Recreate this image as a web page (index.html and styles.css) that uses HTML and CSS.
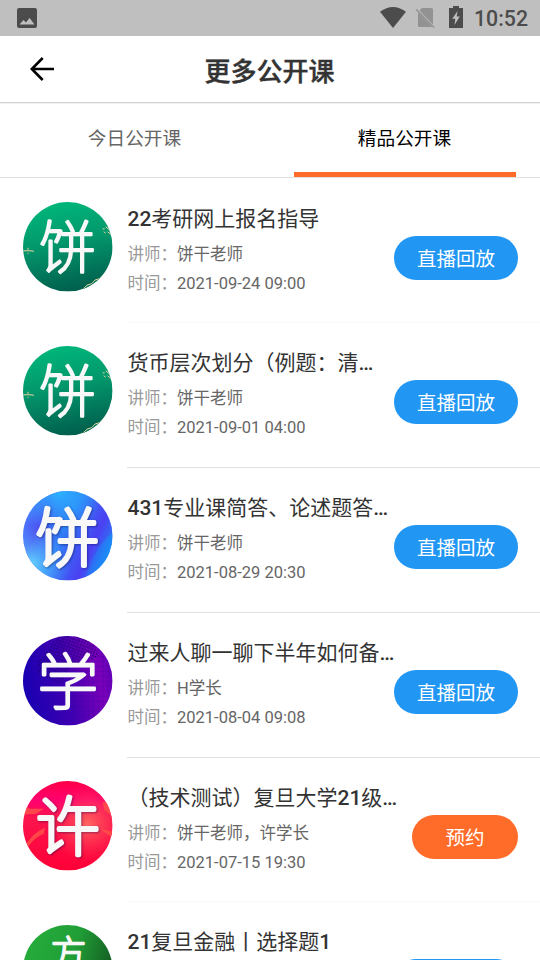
FILE: index.html
```html
<!DOCTYPE html>
<html lang="zh-CN">
<head>
<meta charset="utf-8">
<title>更多公开课</title>
<link rel="stylesheet" href="styles.css">
</head>
<body>
<div class="status">
  <svg class="status-image" width="20" height="20" viewBox="0 0 20 20"><path fill="#4c4c4c" fill-rule="evenodd" d="M2 0h16a2 2 0 0 1 2 2v16a2 2 0 0 1-2 2H2a2 2 0 0 1-2-2V2a2 2 0 0 1 2-2zM2.500 16.500h15L12.600 10 9 14.600 6.500 12z"/></svg>
  <svg class="status-wifi" width="26" height="21" viewBox="0 0 26 21"><path fill="#4c4c4c" d="M0 4.800Q13-4.800 26 4.800L13 21z"/></svg>
  <svg class="status-sim" width="20" height="22" viewBox="0 0 20 22"><path fill="#929292" d="M7 1h9.500a1.500 1.500 0 0 1 1.500 1.500v15L4.500 3.500zM3 5.500l14.200 14.500H4.500A1.500 1.500 0 0 1 3 18.500z"/><path stroke="#929292" stroke-width="1.600" d="M1 2.200l18 18.300"/></svg>
  <svg class="status-battery" width="14" height="22" viewBox="0 0 14 22"><path fill="#4c4c4c" fill-rule="evenodd" d="M4 0h6v2h4v20H0V2h4zM8.500 5L3.300 12.800h3L5.500 19l5.300-8.500H7.700z"/></svg>
  <span class="clock">10:52</span>
</div>
<header class="header">
  <svg class="back" width="24" height="24" viewBox="0 0 24 24"><path fill="none" stroke="#000" stroke-width="2.600" d="M24 12H2M12.700 1L1.800 12l10.900 11"/></svg>
  <h1>更多公开课</h1>
</header>
<nav class="tabs">
  <div class="tab">今日公开课</div>
  <div class="tab active">精品公开课</div>
</nav>
<svg class="defs" width="0" height="0">
  <defs>
    <linearGradient id="green" x1=".4" y1="0" x2=".6" y2="1"><stop offset="0" stop-color="#00b67a"/><stop offset=".45" stop-color="#03966b"/><stop offset="1" stop-color="#005d4c"/></linearGradient>
    <linearGradient id="blue" x1="0" y1=".25" x2="1" y2=".7"><stop offset="0" stop-color="#4a86ff"/><stop offset=".2" stop-color="#5048f0"/><stop offset=".45" stop-color="#317bf5"/><stop offset=".78" stop-color="#4b40f2"/><stop offset="1" stop-color="#208cf5"/></linearGradient>
    <radialGradient id="cyanTop" cx=".4" cy="0" r=".5"><stop offset="0" stop-color="#28b5ff"/><stop offset="1" stop-color="#28b5ff" stop-opacity="0"/></radialGradient>
    <radialGradient id="cyanLow" cx=".08" cy=".82" r=".45"><stop offset="0" stop-color="#65d8ff"/><stop offset="1" stop-color="#45a8ff" stop-opacity="0"/></radialGradient>
    <linearGradient id="azure" x1="0" y1="0" x2="1" y2=".6"><stop offset=".2" stop-color="#168ff5" stop-opacity="0"/><stop offset="1" stop-color="#168ff5"/></linearGradient>
    <linearGradient id="purple" x1="0" y1=".6" x2="1" y2=".4"><stop offset="0" stop-color="#1600b4"/><stop offset=".5" stop-color="#4300b3"/><stop offset=".85" stop-color="#7c00ba"/><stop offset="1" stop-color="#6500b8"/></linearGradient>
    <pattern id="dots" width="3" height="3" patternUnits="userSpaceOnUse" patternTransform="rotate(20)"><rect width="1.300" height="1.300" fill="#16006c"/></pattern>
    <pattern id="mesh" width="5" height="5" patternUnits="userSpaceOnUse"><path d="M0 0H5M0 0V5" stroke="#25008c" stroke-opacity=".35"/></pattern>
    <linearGradient id="red" x1="0" y1="0" x2="0" y2="1"><stop offset="0" stop-color="#ff0048"/><stop offset=".22" stop-color="#ff0070"/><stop offset=".4" stop-color="#fb154e"/><stop offset="1" stop-color="#ff0037"/></linearGradient>
    <radialGradient id="coral" cx=".72" cy=".48" r=".43"><stop offset="0" stop-color="#ff6661"/><stop offset="1" stop-color="#ff3152" stop-opacity="0"/></radialGradient>
    <linearGradient id="leaf" x1="0" y1=".15" x2="1" y2=".45"><stop offset="0" stop-color="#25ad3b"/><stop offset=".55" stop-color="#219f37"/><stop offset=".95" stop-color="#156424"/></linearGradient>
    <clipPath id="round"><circle cx="45" cy="45" r="45"/></clipPath>
    <g id="greenDisc" clip-path="url(#round)">
      <rect width="90" height="90" fill="url(#green)"/>
      <path d="M60 87q4-5 9-5 3-5 9-6l7-3 5-5v22H60z" fill="#067657"/>
      <path d="M60 88q4-6 9-6 3-5 8-5 4-4 10-5M0 49h7l4 .5M5 46v2M5 51v1M80 27h2M83 25l4 3M85 30l4 3M81 30l2 1M87 25v3" fill="none" stroke="#ead39d" stroke-width="1"/>
    </g>
  </defs>
</svg>
<main class="list">
  <article class="row short">
    <svg class="avatar" viewBox="0 0 90 90"><use href="#greenDisc"/><text class="glyph thin" x="44.500" y="66.500">饼</text></svg>
    <div class="body first">
      <div class="info"><h2><b>22</b>考研网上报名指导</h2><p><span>讲师：</span>饼干老师</p><p><span>时间：</span>2021-09-24 09:00</p></div>
      <button class="btn">直播回放</button>
    </div>
  </article>
  <article class="row">
    <svg class="avatar" viewBox="0 0 90 90"><use href="#greenDisc"/><text class="glyph thin" x="44.500" y="66.500">饼</text></svg>
    <div class="body faint">
      <div class="info"><h2>货币层次划分（例题：清<b>…</b></h2><p><span>讲师：</span>饼干老师</p><p><span>时间：</span>2021-09-01 04:00</p></div>
      <button class="btn">直播回放</button>
    </div>
  </article>
  <article class="row">
    <svg class="avatar" viewBox="0 0 90 90"><g clip-path="url(#round)"><rect width="90" height="90" fill="url(#blue)"/><rect width="90" height="90" fill="url(#cyanTop)"/><rect width="90" height="90" fill="url(#cyanLow)"/><path d="M90 42Q70 58 62 90h28z" fill="url(#azure)"/></g><text class="glyph big" x="44.500" y="70">饼</text></svg>
    <div class="body">
      <div class="info"><h2><b>431</b>专业课简答、论述题答<b>…</b></h2><p><span>讲师：</span>饼干老师</p><p><span>时间：</span>2021-08-29 20:30</p></div>
      <button class="btn">直播回放</button>
    </div>
  </article>
  <article class="row">
    <svg class="avatar" viewBox="0 0 90 90"><g clip-path="url(#round)"><rect width="90" height="90" fill="url(#purple)"/><rect width="90" height="90" fill="url(#mesh)"/><path d="M14 28L35 0h32l10 20-30 12-8 16-24-10z" fill="url(#dots)"/></g><text class="glyph medium" x="45" y="68">学</text></svg>
    <div class="body">
      <div class="info"><h2>过来人聊一聊下半年如何备<b>…</b></h2><p><span>讲师：</span>H学长</p><p><span>时间：</span>2021-08-04 09:08</p></div>
      <button class="btn">直播回放</button>
    </div>
  </article>
  <article class="row short">
    <svg class="avatar" viewBox="0 0 90 90"><g clip-path="url(#round)"><rect width="90" height="90" fill="url(#red)"/><rect width="90" height="90" fill="url(#coral)"/><path d="M0 24l7 4 14 0-8 5-13 1zM2 66Q8 53 22 47l-1 6Q12 56 5 66zM80 21l6 0 4 14-8-5zM77 48l13 3v6z" fill="#ff5149" opacity=".85"/></g><text class="glyph big" x="45" y="69">许</text></svg>
    <div class="body">
      <div class="info"><h2>（技术测试）复旦大学<b>21</b>级<b>…</b></h2><p><span>讲师：</span>饼干老师，许学长</p><p><span>时间：</span>2021-07-15 19:30</p></div>
      <button class="btn book">预约</button>
    </div>
  </article>
  <article class="row">
    <svg class="avatar" viewBox="0 0 90 90"><circle cx="45" cy="45" r="45" fill="url(#leaf)"/><text class="glyph small" x="45.500" y="42.500">方</text></svg>
    <div class="body faint">
      <div class="info"><h2><b>21</b>复旦金融丨选择题<b>1</b></h2></div>
      <button class="btn">直播回放</button>
    </div>
  </article>
</main>
</body>
</html>
```
FILE: styles.css
```css
* { box-sizing: border-box; }
html, body { height: 960px; overflow: hidden; }
body {
  margin: 0;
  display: flex;
  flex-direction: column;
  background: #fff;
  font-family: Roboto, "Noto Sans CJK SC", sans-serif;
  color: #333;
}
.status {
  flex: none;
  display: flex;
  align-items: flex-start;
  height: 36px;
  padding: 0 12px 0 17px;
  background: #bfbfbf;
}
.status-image { margin-top: 8px; margin-right: auto; }
.status-wifi { margin: 7px 9px 0 0; }
.status-sim { margin: 7px 14px 0 0; }
.status-battery { margin: 6px 11px 0 0; }
.clock {
  width: 54px;
  font-size: 21.3px;
  line-height: 37px;
  font-weight: 500;
  color: #4c4c4c;
  white-space: nowrap;
}
.header {
  flex: none;
  display: grid;
  grid-template-columns: 60px 1fr 61px;
  align-items: center;
  height: 67px;
  border-bottom: 1px solid #d2d2d2;
}
.back { margin-left: 30px; }
.header h1 {
  margin: 0;
  padding-top: 5px;
  text-align: center;
  font-size: 26px;
  line-height: 38px;
  font-weight: 500;
  -webkit-text-stroke: .4px #333;
}
.tabs {
  flex: none;
  display: flex;
  height: 75px;
  border-top: 1px solid #f0f0f0;
  border-bottom: 1px solid #e1e1e1;
}
.tab {
  flex: 1;
  margin: 0 24px;
  padding-right: 1px;
  text-align: center;
  font-size: 18.67px;
  line-height: 70px;
  color: #666;
}
.tab.active { color: #000; border-bottom: 5px solid #ff6c2a; }
.defs { display: block; flex: none; }
.list { flex: 1; min-height: 0; overflow: hidden; }
.row {
  display: flex;
  height: 145px;
  padding-left: 22.5px;
}
.row.short { height: 144px; }
.avatar { flex: none; width: 89.6px; height: 89.6px; margin: 23.8px 15.4px 0 0; overflow: visible; }
.glyph {
  font-family: "Noto Sans CJK SC", sans-serif;
  font-weight: 100;
  text-anchor: middle;
  fill: #f8f8f8;
  stroke: #f8f8f8;
  stroke-linejoin: round;
}
.thin { font-size: 57px; stroke-width: 2.6px; }
.medium { font-size: 61px; stroke-width: 2.8px; }
.small { font-size: 36px; stroke-width: 2.4px; }
.big { font-size: 64px; stroke-width: 4.2px; filter: drop-shadow(1px 1px 1px rgba(0, 0, 60, .4)); }
.body {
  flex: 1;
  display: flex;
  align-items: flex-start;
  justify-content: space-between;
  padding-right: 22.5px;
  border-top: 1px solid #e1e1e1;
}
.body.first { border-top-color: transparent; }
.body.faint { border-top-color: #fafafa; }
.info { width: 0; padding-top: 25px; white-space: nowrap; }
.info h2 {
  margin: 0 0 5px;
  font-size: 21px;
  line-height: 31px;
  font-weight: 400;
}
.info h2 b { font-weight: 500; }
.info p {
  margin: 0;
  font-size: 16.5px;
  line-height: 29.4px;
  color: #666;
}
.info span { color: #999; }
.btn {
  flex: none;
  height: 43.5px;
  margin-top: 57px;
  padding: 3px 22.5px 0;
  border: 0;
  border-radius: 22px;
  background: #2196f3;
  color: #fff;
  font: 400 19.5px/42px Roboto, "Noto Sans CJK SC", sans-serif;
}
.btn.book { padding: 3px 33px 0; background: #ff6c2a; }
```
